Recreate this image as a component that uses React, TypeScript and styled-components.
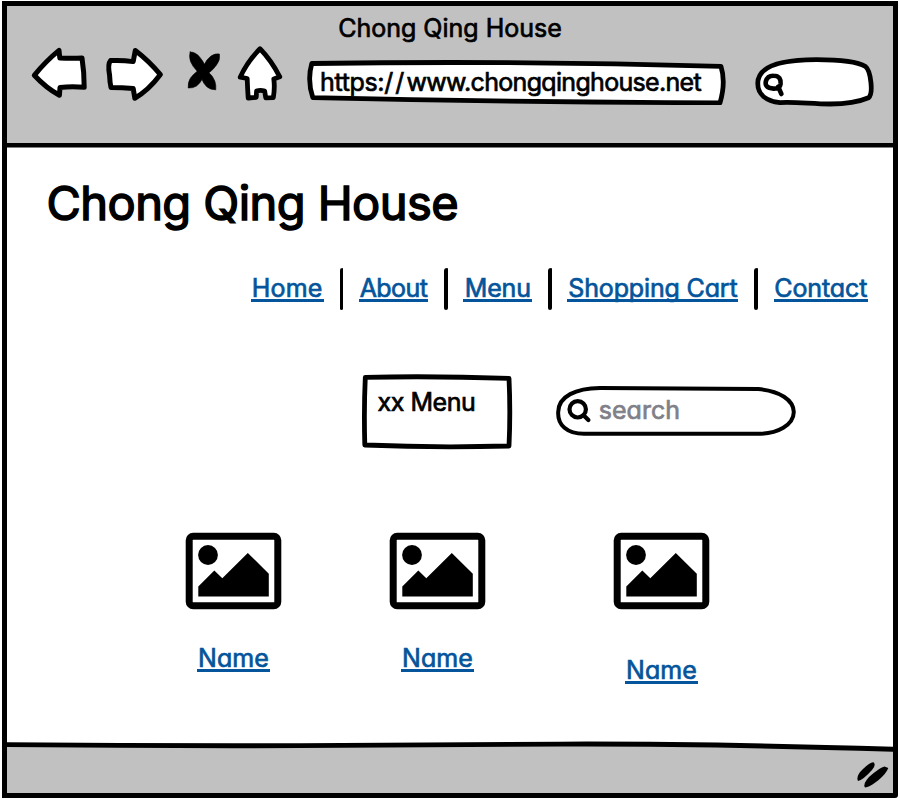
import React from 'react';
import styled, { createGlobalStyle } from 'styled-components';

const GRAY = '#c1c1c1';
const LINK = '#04559b';

const GlobalStyle = createGlobalStyle`
  body {
    margin: 0;
    background: #fff;
    overflow: hidden;
  }
`;

const Browser = styled.div`
  box-sizing: border-box;
  width: 896px;
  height: 797px;
  margin: 1px 0 0 2px;
  border: 5px solid #000;
  border-bottom-right-radius: 3px;
  display: flex;
  flex-direction: column;
  background: #fff;
  color: #000;
  font-family: Inter, 'Noto Sans', sans-serif;
  font-size: 25px;
  line-height: 30px;
  font-feature-settings: 'cv11' 1, 'calt' 0;
`;

const Header = styled.header`
  height: 143px;
  flex: none;
  display: flex;
  flex-direction: column;
  background: ${GRAY};
`;

const Label = styled.span<{ $spacing?: number; $color?: string }>`
  white-space: nowrap;
  letter-spacing: ${(p) => p.$spacing ?? 0}px;
  color: ${(p) => p.$color ?? '#000'};
  -webkit-text-stroke: 0.7px currentColor;
  stroke-linejoin: round;
`;

const WindowTitle = styled.div`
  padding: 7px 0 0 0;
  text-align: center;
`;

const Toolbar = styled.div`
  flex: 1;
  display: flex;
  align-items: flex-start;
  padding-left: 21px;
`;

const Drawing = styled.svg<{ $gap?: number }>`
  display: block;
  flex: none;
  margin-left: ${(p) => p.$gap ?? 0}px;
  stroke-linejoin: round;
  stroke-linecap: round;
`;

const Field = styled.div<{ $w: number; $h: number; $gap?: number; $pad: string }>`
  position: relative;
  box-sizing: border-box;
  flex: none;
  width: ${(p) => p.$w}px;
  height: ${(p) => p.$h}px;
  margin-left: ${(p) => p.$gap ?? 0}px;
  padding: ${(p) => p.$pad};
  display: flex;
  align-items: flex-start;
  isolation: isolate;
`;

const Outline = styled.svg`
  position: absolute;
  inset: 0;
  z-index: -1;
  fill: #fff;
  stroke: #000;
  stroke-linejoin: round;
`;

const Content = styled.main`
  flex: 1;
  display: flex;
  flex-direction: column;
`;

const Heading = styled.h1`
  margin: 23.5px 0 0 39.5px;
  font-size: 47px;
  line-height: 60px;
  font-weight: 400;
  letter-spacing: -0.55px;
  -webkit-text-stroke: 1.5px #000;
`;

const Nav = styled.nav`
  display: flex;
  justify-content: flex-end;
  align-items: flex-start;
  margin: 35px 25px 0 0;
`;

const Divider = styled.i`
  width: 3.6px;
  height: 42px;
  margin: 0 15.5px 0 16px;
  border-radius: 3px 1px 2px 2px;
  background: #000;
`;

const Link = styled.a<{ $w: number; $spacing?: number }>`
  box-sizing: border-box;
  width: ${(p) => p.$w}px;
  height: 29px;
  border-bottom: 3px solid ${LINK};
  color: ${LINK};
  text-align: center;
  white-space: nowrap;
  letter-spacing: ${(p) => p.$spacing ?? 0}px;
  -webkit-text-stroke: 0.7px ${LINK};
`;

const NavLink = styled(Link)`
  margin-top: 4px;
  padding-top: 1px;
  height: 30px;
`;

const Controls = styled.div`
  display: flex;
  align-items: flex-start;
  margin: 63px 0 0 354px;
`;

const Gallery = styled.div`
  display: grid;
  grid-template-columns: 204px 224px 97px;
  margin: 81px 0 0 178px;
`;

const Card = styled.figure<{ $gap: number }>`
  margin: 0;
  width: 97px;
  display: flex;
  flex-direction: column;
  align-items: center;
  gap: ${(p) => p.$gap}px;
`;

const Footer = styled.footer`
  flex: none;
  height: 53px;
  display: flex;
  flex-direction: column;
  background: ${GRAY};
`;

const Grip = styled.svg`
  display: block;
  margin: 6px 3px 0 auto;
`;

const Picture = () => (
  <Drawing width={97} height={78} viewBox="185 532 97 78">
    <rect x="189.2" y="536.2" width="88.6" height="69.6" rx="4" fill="#fff" stroke="#000" strokeWidth="7" />
    <circle cx="208" cy="555" r="9.9" />
    <path d="M198.3 596.5V586.4L214.3 570.5L222.3 578.3L247.8 553L268.8 573.7V596.5Z" />
  </Drawing>
);

const links = [
  { text: 'Home', w: 73, spacing: 0.2 },
  { text: 'About', w: 69.5, spacing: -0.6 },
  { text: 'Menu', w: 69, spacing: -0.1 },
  { text: 'Shopping Cart', w: 171, spacing: -0.15 },
  { text: 'Contact', w: 94.5, spacing: -0.1 },
];

const cards = [
  { name: 'Name', gap: 33 },
  { name: 'Name', gap: 33 },
  { name: 'Name', gap: 45 },
];

export default function App() {
  return (
    <>
      <GlobalStyle />
      <Browser>
        <Header>
          <WindowTitle><Label $spacing={0}>Chong Qing House</Label></WindowTitle>
          <Toolbar>
            {/* back */}
            <Drawing width={64} height={62} viewBox="28 43 64 62" fill="#fff" stroke="#000" strokeWidth="5">
              <path d="M34.3 75.3Q46 61 59 50.4L59.8 58Q72 58.6 82 58Q84.2 72 84.2 87.3Q72 86.4 60 87.4L59.4 95.3Q46 88 34.3 75.3Z" />
            </Drawing>
            {/* forward */}
            <Drawing $gap={10} width={64} height={62} viewBox="102 43 64 62" fill="#fff" stroke="#000" strokeWidth="5">
              <path d="M110.5 60.6Q122 60 133.2 61.6L135.3 50.5Q149 61 160.4 74.6Q148 91 134.8 98.2L133.2 88.4Q122 87.6 111 87.5Q109.8 82 109.6 75.5Q107.5 64 110.5 60.6Z" />
            </Drawing>
            {/* stop */}
            <Drawing $gap={18} width={38} height={62} viewBox="184 43 38 62">
              <path d="M190.2 52Q196 52 200 57.5Q203 61 204.4 64.2Q207 59 211 56Q215 53.3 219.4 54Q220.5 60 216.5 65Q213 70 209 72.8Q213 76 214.8 81Q216.2 85 215.8 89.8Q210.5 90 206.5 86.5Q203.5 83.5 202 79.5Q200 83.5 196.5 86Q193 88.3 188.2 88Q187.8 82 190.5 78Q193 74.5 197.2 71.2Q192.5 66.5 190.5 61.5Q188.8 56 190.2 52Z" stroke="#000" strokeWidth="0.6" />
            </Drawing>
            {/* home */}
            <Drawing $gap={12} width={52} height={62} viewBox="234 43 52 62" fill="#fff" stroke="#000" strokeWidth="4.8">
              <path d="M260 48.8Q271 60 279.8 76.8L273.8 79Q275 88 273.3 97.6L265.8 97.8L264.6 91Q260.3 89.6 256.6 91L256.2 97.4L248.2 98Q247.5 88 247.2 78.5L240.2 77.2Q247 62 260 48.8Z" />
            </Drawing>
            <Field $gap={18} $w={424} $h={62} $pad="23.5px 0 0 16px">
              <Outline width={424} height={62} viewBox="304 43 424 62" strokeWidth="4.8">
                <path d="M311.8 63.5Q520 60.5 721 66.4Q726 82 720 102.8Q510 102 312.8 97.6Q307 80 311.8 63.5Z" />
              </Outline>
              <Label $spacing={-0.35}>https:</Label>
              <Label $spacing={2.2}>//</Label>
              <Label $spacing={-0.68}>www.chongqinghouse.net</Label>
            </Field>
            <Field $gap={24} $w={126} $h={66} $pad="28px 0 0 10px">
              <Outline width={126} height={66} viewBox="752 43 126 66" strokeWidth="4.8">
                <path d="M757.8 83C758 67 779 59.6 816.7 59.6C840 59.6 858 62 865.5 66.5C871 71 873.5 94 868.5 97.8C861 101 846 104 830 104C812 104 796 101.7 780 102.6C766 101 757.5 94 757.8 83Z" />
              </Outline>
              <Drawing width={26} height={28} viewBox="762 71 26 28" fill="#fff" stroke="#000" strokeWidth="4.6">
                <path d="M773.5 75.8C779.5 75.8 781 79.5 780.6 84Q780 88.8 773.5 88.6C767 88.4 765 85.5 765.8 81.5C767 77.3 769.5 75.7 773.5 75.8ZM778.2 86.6L781.4 94" />
              </Drawing>
            </Field>
          </Toolbar>
          <svg width={886} height={7} viewBox="7 142 886 7" preserveAspectRatio="none">
            <path d="M7 145.3Q400 146.6 893 145.3V156H7Z" fill="#fff" />
            <path d="M5 145.3Q400 146.6 895 145.3" fill="none" stroke="#000" strokeWidth="4.6" />
          </svg>
        </Header>
        <Content>
          <Heading>Chong Qing House</Heading>
          <Nav>
            {links.map((l, i) => (
              <React.Fragment key={l.text}>
                {i > 0 && <Divider />}
                <NavLink $w={l.w} $spacing={l.spacing}>{l.text}</NavLink>
              </React.Fragment>
            ))}
          </Nav>
          <Controls>
            <Field $w={153} $h={78} $pad="14px 0 0 16.5px">
              <Outline width={153} height={78} viewBox="361 373 153 78" strokeWidth="4.8">
                <path d="M365.3 377.3Q435 375.8 509 378.4Q510.6 412 509 446Q435 448 364.8 445Q363.8 410 365.3 377.3Z" />
              </Outline>
              <Label $spacing={-0.45}>xx Menu</Label>
            </Field>
            <Field $gap={39} $w={248} $h={78} $pad="22.5px 0 0 13px">
              <Outline width={248} height={78} viewBox="553 373 248 78" strokeWidth="4">
                <path d="M558.2 412C558.5 396 576 388.3 600 388L758 389C780 391 793.5 400 793.8 412C793.5 425 778 433.8 758 433.8H584C567 433.8 557.5 425 558.2 412Z" />
              </Outline>
              <Drawing width={26} height={28} viewBox="566 396 26 28" fill="none" stroke="#000" strokeWidth="4.2">
                <circle cx="577.7" cy="410.3" r="8.2" />
                <path d="M583.8 416.4L588.4 421" />
              </Drawing>
              <Label $spacing={0} $color="#808089">&#8202;&#8202;&#8202;search</Label>
            </Field>
          </Controls>
          <Gallery>
            {cards.map((c, i) => (
              <Card key={i} $gap={c.gap}>
                <Picture />
                <Link $w={73} $spacing={0.1}>{c.name}</Link>
              </Card>
            ))}
          </Gallery>
        </Content>
        <Footer>
          <svg width={886} height={14} viewBox="7 740 886 14">
            <path d="M7 739H893V749.2Q700 743.3 560 743.6Q440 745.4 300 745.6L7 744.5Z" fill="#fff" />
            <path d="M5 744.6Q150 746 300 745.6Q440 745.2 560 744.1Q700 743.5 895 749.3" fill="none" stroke="#000" strokeWidth="4.9" />
          </svg>
          <Grip width={34} height={30} viewBox="856 760 34 30">
            <path d="M858 781Q855.5 776 863 769Q870 762 873.5 762.2Q876.5 765 872 770Q863 780 858 781Z" />
            <path d="M865 787.6Q862.5 784 869 777Q880 767 884.5 766.4L888.3 768Q886 774 878 780.5Q869 787.5 865 787.6Z" />
          </Grip>
        </Footer>
      </Browser>
    </>
  );
}
